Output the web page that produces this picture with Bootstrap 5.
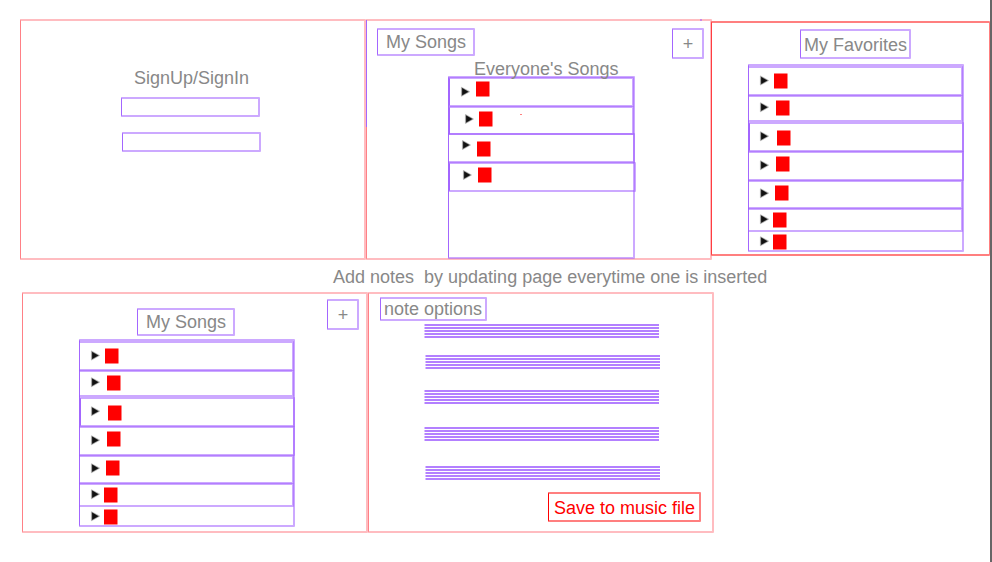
<!DOCTYPE html>
<html lang="en">
<head>
<meta charset="utf-8">
<meta name="viewport" content="width=device-width, initial-scale=1">
<title>Song app wireframe</title>
<link href="https://cdn.jsdelivr.net/npm/bootstrap@5.3.0/dist/css/bootstrap.min.css" rel="stylesheet">
<style>
  body { width: 992px; height: 562px; overflow: hidden; background: #fff; color: #888;
         border-right: 2px solid #666; font: 18px/20px "Liberation Sans", Arial, sans-serif; }
  /* Outlines: crisp left edge, soft edges on the other sides */
  .outline { --line: #a366ff; --soft: rgba(153, 85, 255, .5);
             border: 2px solid var(--soft); border-left: 1px solid var(--line); border-radius: 1px; flex-shrink: 0; }
  .outline-pink { --line: #ff8086; --soft: rgba(255, 122, 130, .5); }
  .outline-red { --line: #f00; --soft: rgba(255, 0, 0, .5); }

  .screens-top { padding: 19px 0 0 20px; }
  .screens-bottom { padding: 5px 0 0 22px; }
  .screen { width: 346px; height: 241px; }
  .screen-fav { width: 279px; height: 235px; margin: 2px 0 0 -1px; border-right-width: 1px; }
  .screen-songs::before { content: ""; position: absolute; left: -1px; top: -1px; width: 1px; height: 107px; background: #a366ff; }
  .speck-a { left: 333px; top: -2px; width: 2px; height: 2px; background: rgba(153, 85, 255, .5); }
  .speck-b { left: 153px; top: 93px; width: 2px; height: 1px; background: rgba(255, 0, 0, .5); }
  .caption-line { margin: 7px 0 0 333px; white-space: pre; }

  .login-title { margin: 47px 0 0 113px; }
  .login-field { width: 139px; height: 20px; }
  .login-user { margin: 9px 0 0 100px; }
  .login-pass { margin: 15px 0 0 101px; }

  .tag { width: 98px; height: 28px; padding-left: 1px; white-space: nowrap; }
  .tag-add { width: 32px; height: 31px; padding-top: 1px; padding-left: 1px; }
  .tag-fav { width: 111px; height: 30px; padding-top: 1px; margin: 6px 0 0 88px; }
  .tag-note { width: 107px; height: 24px; padding-left: 0; margin: 3px 0 0 11px; }
  .tag-save { width: 153px; height: 30px; padding-top: 1px; margin: 12px 0 0 179px; color: #f00; }
  .bar-all { padding: 7px 6px 0 10px; }
  .bar-mine { padding: 5px 7px 0 114px; }
  .bar-mine .tag-mine { margin-top: 9px; }
  .all-title { margin-left: 107px; }

  .songs { width: 216px; height: 188px; }
  .songs > div { width: 215px; height: 30px; margin: -1px 0 0 -1px; }
  .songs > :nth-child(1) { margin-top: 0; }
  .songs > :nth-child(2) { height: 27px; }
  .songs > :nth-child(3) { margin: 0; }
  .songs > :nth-child(4) { width: 216px; }
  .songs > :nth-child(5) { height: 29px; }
  .songs > :nth-child(6) { height: 24px; }
  .songs > :nth-child(7) { height: 22px; margin-top: -2px; }
  .songs-fav { margin: 5px 0 0 36px; }
  .songs-mine { margin: 3px 0 0 56px; }
  .songs-all { width: 187px; height: 183px; margin: -3px 0 0 81px; }
  .songs-all > div { width: 185px; height: 30px; margin-top: -1px; }
  .songs-all > :nth-child(2) { height: 29px; }
  .songs-all > :nth-child(3) { width: 187px; margin: -2px 0 0 -1px; }
  .songs-all > :nth-child(4) { width: 187px; }
  .controls { display: block; width: 50px; height: 20px; overflow: visible; }
  .outline > .controls { margin: -2px 0 0 -1px; }

  .staff { width: 235px; height: 14px; margin-left: 55px; flex-shrink: 0;
           background: linear-gradient(rgba(255,255,255,.5), rgba(255,255,255,.5)) 0 0 / 1px 100% no-repeat,
                       repeating-linear-gradient(#b380ff 0 2px, #fff 2px 3px); }
  .staff-1 { margin-top: 3px; }
  .staff-2 { margin-top: 17px; margin-left: 56px; }
  .staff-3 { margin-top: 21px; }
  .staff-4 { margin-top: 23px; }
  .staff-5 { margin-top: 25px; margin-left: 56px; }
</style>
<script src="https://cdn.jsdelivr.net/npm/bootstrap@5.3.0/dist/js/bootstrap.bundle.min.js"></script>
</head>
<body>
<svg class="position-absolute" width="0" height="0" aria-hidden="true">
  <defs>
    <g id="play">
      <path d="M0-4.2 7.6 0 0 4.2Z" fill="#000" fill-opacity=".35" stroke="#000" stroke-opacity=".25" stroke-width="1.4" stroke-linejoin="round"/>
      <path d="M.5-3.6 6.8 0 .5 3.6Z" fill="#111"/>
    </g>
    <rect id="stop" width="13.5" height="15" fill="#f00"/>
  </defs>
</svg>

<div class="screens-top d-flex align-items-start">
  <section class="screen outline outline-pink d-flex flex-column align-items-start">
    <div class="login-title">SignUp/SignIn</div>
    <div class="login-field login-user outline"></div>
    <div class="login-field login-pass outline"></div>
  </section>

  <section class="screen screen-songs outline outline-pink position-relative">
    <div class="bar-all d-flex justify-content-between align-items-start">
      <div class="tag outline d-flex align-items-center justify-content-center">My Songs</div>
      <div class="tag tag-add outline d-flex align-items-center justify-content-center">+</div>
    </div>
    <div class="all-title position-relative z-1">Everyone's Songs</div>
    <div class="songs-all outline d-flex flex-column">
      <div class="outline"><svg class="controls"><use href="#play" x="12.6" y="14.7"/><use href="#stop" x="27" y="4.5"/></svg></div>
      <div class="outline"><svg class="controls"><use href="#play" x="16.6" y="13"/><use href="#stop" x="30" y="5.5"/></svg></div>
      <div class="outline"><svg class="controls"><use href="#play" x="14.6" y="12"/><use href="#stop" x="29" y="8.5"/></svg></div>
      <div class="outline"><svg class="controls"><use href="#play" x="14.6" y="13"/><use href="#stop" x="29" y="5.5"/></svg></div>
    </div>
    <i class="speck-a position-absolute"></i>
    <i class="speck-b position-absolute"></i>
  </section>

  <section class="screen-fav outline outline-red">
    <div class="tag tag-fav outline d-flex align-items-center justify-content-center">My Favorites</div>
    <div class="songs songs-fav outline d-flex flex-column">
      <div class="outline"><svg class="controls"><use href="#play" x="12.6" y="14.5"/><use href="#stop" x="26" y="7.5"/></svg></div>
      <div class="outline"><svg class="controls"><use href="#play" x="12.6" y="12.2"/><use href="#stop" x="28" y="5.5"/></svg></div>
      <div class="outline"><svg class="controls"><use href="#play" x="11.6" y="14.2"/><use href="#stop" x="28" y="8.5"/></svg></div>
      <div class="outline"><svg class="controls"><use href="#play" x="12.6" y="14.2"/><use href="#stop" x="28" y="5.5"/></svg></div>
      <div class="outline"><svg class="controls"><use href="#play" x="12.6" y="13.2"/><use href="#stop" x="27" y="5.5"/></svg></div>
      <div class="outline"><svg class="controls"><use href="#play" x="12.6" y="11.2"/><use href="#stop" x="25" y="4.5"/></svg></div>
      <div><svg class="controls"><use href="#play" x="12.6" y="11.2"/><use href="#stop" x="25" y="4.5"/></svg></div>
    </div>
  </section>
</div>

<div class="caption-line">Add notes  by updating page everytime one is inserted</div>

<div class="screens-bottom d-flex align-items-start">
  <section class="screen outline outline-pink">
    <div class="bar-mine d-flex justify-content-between align-items-start">
      <div class="tag tag-mine outline d-flex align-items-center justify-content-center">My Songs</div>
      <div class="tag tag-add outline d-flex align-items-center justify-content-center">+</div>
    </div>
    <div class="songs songs-mine outline d-flex flex-column">
      <div class="outline"><svg class="controls"><use href="#play" x="12.6" y="14.5"/><use href="#stop" x="26" y="7.5"/></svg></div>
      <div class="outline"><svg class="controls"><use href="#play" x="12.6" y="12.2"/><use href="#stop" x="28" y="5.5"/></svg></div>
      <div class="outline"><svg class="controls"><use href="#play" x="11.6" y="14.2"/><use href="#stop" x="28" y="8.5"/></svg></div>
      <div class="outline"><svg class="controls"><use href="#play" x="12.6" y="14.2"/><use href="#stop" x="28" y="5.5"/></svg></div>
      <div class="outline"><svg class="controls"><use href="#play" x="12.6" y="13.2"/><use href="#stop" x="27" y="5.5"/></svg></div>
      <div class="outline"><svg class="controls"><use href="#play" x="12.6" y="11.2"/><use href="#stop" x="25" y="4.5"/></svg></div>
      <div><svg class="controls"><use href="#play" x="12.6" y="11.2"/><use href="#stop" x="25" y="4.5"/></svg></div>
    </div>
  </section>

  <section class="screen outline outline-pink d-flex flex-column align-items-start">
    <div class="tag tag-note outline d-flex align-items-center justify-content-center">note options</div>
    <div class="staff staff-1"></div>
    <div class="staff staff-2"></div>
    <div class="staff staff-3"></div>
    <div class="staff staff-4"></div>
    <div class="staff staff-5"></div>
    <div class="tag tag-save outline outline-red d-flex align-items-center justify-content-center">Save to music file</div>
  </section>
</div>
</body>
</html>
